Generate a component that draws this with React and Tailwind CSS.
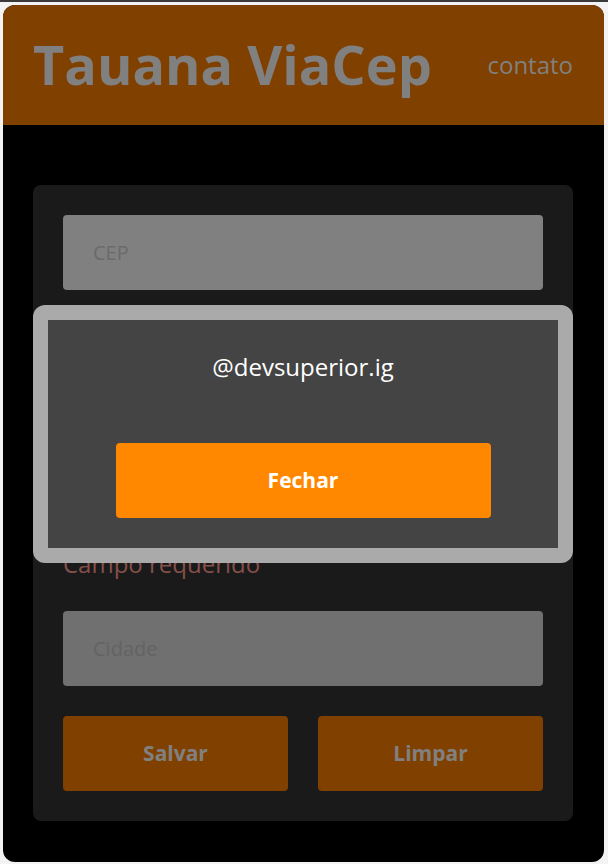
import React from "react";

const font = { fontFamily: '"Open Sans", "Noto Sans", sans-serif' };

function Field({ placeholder, className = "" }) {
  return (
    <input
      readOnly
      placeholder={placeholder}
      className={`block w-full h-[75px] rounded-[4px] px-[30px] text-[20px] outline-none ${className}`}
      style={font}
    />
  );
}

export default function App() {
  return (
    <div
      className="h-[864px] w-[608px] bg-[#f3f3f3] border-t-2 border-[#3a3a3a] pt-[3px] pl-[3px] pr-[4px] pb-[2px]"
      style={font}
    >
      <div className="relative h-full w-full rounded-[12px] overflow-hidden bg-black flex flex-col">
        <header className="h-[120px] shrink-0 bg-[#804000] flex items-center justify-between pl-[30px] pr-[31px]">
          <h1 className="text-[54px] font-bold text-[#808080] leading-[1.362]">Tauana ViaCep</h1>
          <a className="text-[24px] text-[#808080] leading-[1.362]">contato</a>
        </header>
        <main className="pl-[30px] pr-[31px] pt-[60px]">
          <form className="bg-[#1a1a1a] rounded-[8px] p-[30px] flex flex-col">
            <Field placeholder="CEP" className="bg-[#808080] placeholder:text-[#6b6b6b]" />
            <Field placeholder="Logradouro" className="mt-[30px] bg-[#808080] placeholder:text-[#6b6b6b]" />
            <Field placeholder="Número" className="mt-[30px] bg-[#808080] placeholder:text-[#6b6b6b]" />
            <p className="mt-[47px] text-[24px] leading-[33px] text-[#85504a]">Campo requerido</p>
            <Field placeholder="Cidade" className="mt-[31px] bg-[#707070] placeholder:text-[#636363]" />
            <div className="mt-[30px] grid grid-cols-2 gap-[30px]">
              <button type="button" className="h-[75px] rounded-[4px] bg-[#804000] text-[21px] font-bold text-[#808080]">Salvar</button>
              <button type="button" className="h-[75px] rounded-[4px] bg-[#804000] text-[21px] font-bold text-[#808080]">Limpar</button>
            </div>
          </form>
        </main>

        <div className="absolute left-[30px] top-[300px] w-[540px] h-[258px] rounded-[12px] bg-[#aaaaaa] p-[15px]">
          <div className="h-full w-full bg-[#444444] pt-[30px] pb-[30px] flex flex-col items-center">
            <p className="text-[24px] leading-[33px] text-white">@devsuperior.ig</p>
            <button type="button" className="mt-[60px] w-[375px] h-[75px] rounded-[4px] bg-[#ff8800] text-[21px] font-bold text-white">
              Fechar
            </button>
          </div>
        </div>
      </div>
    </div>
  );
}
